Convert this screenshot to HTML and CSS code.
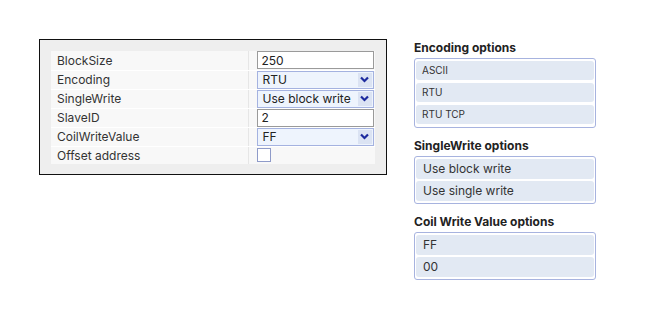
FILE: index.html
```html
<!DOCTYPE html>
<html lang="en">
<head>
    <meta charset="UTF-8">
    <title>Device settings</title>
    <link rel="stylesheet" href="styles.css">
</head>
<body>
<div class="page">
    <div class="settings-box">
        <table class="settings">
            <tr>
                <td class="label">BlockSize</td>
                <td class="value"><input class="field" type="text" value="250"></td>
            </tr>
            <tr>
                <td class="label">Encoding</td>
                <td class="value">
                    <div class="select">
                        <span class="select-text">RTU</span>
                        <span class="select-arrow">
                            <svg width="9" height="7" viewBox="0 0 9 7"><path d="M1 1.5 L4.5 5 L8 1.5" fill="none" stroke="#1c2a9e" stroke-width="2.2"/></svg>
                        </span>
                    </div>
                </td>
            </tr>
            <tr>
                <td class="label">SingleWrite</td>
                <td class="value">
                    <div class="select">
                        <span class="select-text">Use block write</span>
                        <span class="select-arrow">
                            <svg width="9" height="7" viewBox="0 0 9 7"><path d="M1 1.5 L4.5 5 L8 1.5" fill="none" stroke="#1c2a9e" stroke-width="2.2"/></svg>
                        </span>
                    </div>
                </td>
            </tr>
            <tr>
                <td class="label">SlaveID</td>
                <td class="value"><input class="field" type="text" value="2"></td>
            </tr>
            <tr>
                <td class="label">CoilWriteValue</td>
                <td class="value">
                    <div class="select">
                        <span class="select-text">FF</span>
                        <span class="select-arrow">
                            <svg width="9" height="7" viewBox="0 0 9 7"><path d="M1 1.5 L4.5 5 L8 1.5" fill="none" stroke="#1c2a9e" stroke-width="2.2"/></svg>
                        </span>
                    </div>
                </td>
            </tr>
            <tr>
                <td class="label">Offset address</td>
                <td class="value"><span class="check"></span></td>
            </tr>
        </table>
    </div>

    <div class="options">
        <h3 class="options-title">Encoding options</h3>
        <ul class="option-list small">
            <li>ASCII</li>
            <li>RTU</li>
            <li>RTU TCP</li>
        </ul>

        <h3 class="options-title">SingleWrite options</h3>
        <ul class="option-list">
            <li>Use block write</li>
            <li>Use single write</li>
        </ul>

        <h3 class="options-title">Coil Write Value options</h3>
        <ul class="option-list">
            <li>FF</li>
            <li>00</li>
        </ul>
    </div>
</div>
</body>
</html>
```

FILE: styles.css
```css
* {
    box-sizing: border-box;
    margin: 0;
    padding: 0;
}

body {
    font-family: Inter, "Noto Sans", sans-serif;
    background-color: white;
    color: #333;
    padding: 39px;
}

.page {
    display: flex;
    align-items: flex-start;
    gap: 27px;
}

.settings-box {
    width: 348px;
    border: 1px solid #111;
    background-color: #eeeeee;
    padding: 11px 11px 10px 11px;
}

.settings {
    width: 100%;
    border-collapse: collapse;
    background-color: #f8f8f8;
    font-size: 12px;
}

.settings td {
    height: 19px;
    padding: 0;
    border-bottom: 1px solid white;
    vertical-align: middle;
}

.settings tr:last-child td {
    border-bottom: none;
    height: 18px;
}

.label {
    width: 197px;
    padding-left: 6px !important;
    border-right: 1px solid #e6e6e6;
    color: #333;
}

.value {
    padding-left: 8px !important;
}

.field {
    display: block;
    width: 117px;
    height: 18px;
    border: 1px solid #9a9a9a;
    background-color: white;
    font-family: inherit;
    font-size: 12px;
    color: #222;
    padding: 0 4px;
    outline: none;
}

.select {
    position: relative;
    display: flex;
    align-items: center;
    width: 117px;
    height: 18px;
    border: 1px solid #a4b2e0;
    background-color: #eef4fd;
    padding-left: 5px;
}

.select-text {
    flex: 1;
    color: #222;
}

.select-arrow {
    position: absolute;
    right: 1px;
    top: 1px;
    width: 14px;
    height: 14px;
    background-color: #dbe3f3;
    display: flex;
    align-items: center;
    justify-content: center;
}

.check {
    display: block;
    width: 14px;
    height: 14px;
    border: 1px solid #8f9bc9;
    background-color: white;
}

.options {
    width: 182px;
    padding-top: 1px;
}

.options-title {
    font-size: 12px;
    font-weight: 700;
    color: #222;
    margin-bottom: 3px;
}

.option-list {
    list-style: none;
    border: 1px solid #a7b3df;
    border-radius: 3px;
    padding: 2px 1px;
    display: flex;
    flex-direction: column;
    gap: 2px;
    margin-bottom: 10px;
}

.option-list li {
    height: 20px;
    line-height: 20px;
    background-color: #e2e9f3;
    border-radius: 3px;
    padding-left: 7px;
    font-size: 12px;
    color: #333;
}

.option-list.small {
    gap: 3px;
    padding-bottom: 3px;
}

.option-list.small li {
    height: 19px;
    line-height: 19px;
    font-size: 10px;
    padding-left: 6px;
}
```
